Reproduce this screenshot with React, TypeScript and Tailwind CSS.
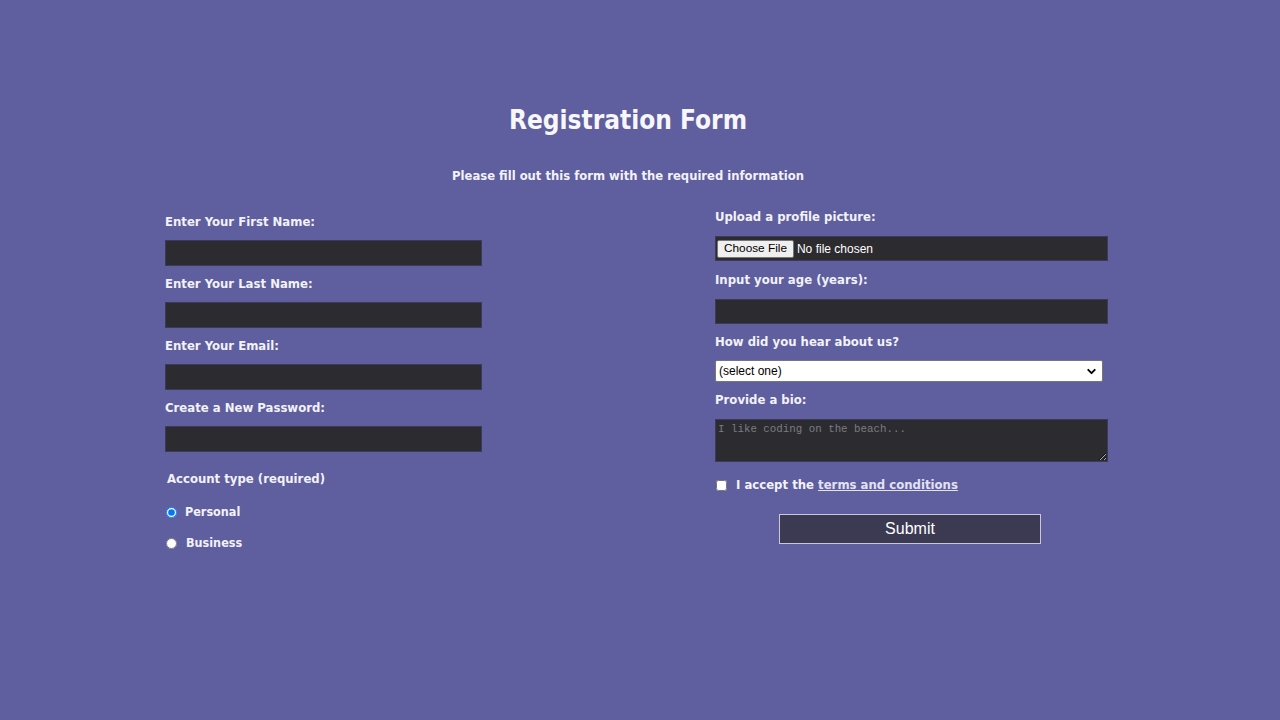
import { ChevronDown } from 'lucide-react';

const FONT = "font-['DejaVu_Sans_Condensed','DejaVu_Sans',sans-serif]";
const LABEL = 'block h-[20px] leading-[20px] text-[13px] font-bold';

function Field({ label, first }: { label: string; first?: boolean }) {
  return (
    <div className={first ? '' : 'mt-[8px]'}>
      <label className={LABEL}>{label}</label>
      <input
        type="text"
        className="mt-[8px] block h-[26px] w-full border border-[#3b3a5a] bg-[#2c2b30] text-white outline-none"
      />
    </div>
  );
}

export default function App() {
  return (
    <div className={`min-h-[720px] w-full bg-[#5f5e9e] text-[#f2f2f7] ${FONT}`}>
      <div className="pr-[24px] pt-[102px] text-center">
        <h1 className="h-[36px] leading-[36px] text-[26px] font-bold text-[#f7f7fb]">Registration Form</h1>
        <p className="mt-[28px] h-[20px] leading-[20px] text-[12.9px] font-bold">
          Please fill out this form with the required information
        </p>
      </div>

      <div className="flex pl-[165px]">
        {/* Left column */}
        <div className="mt-[26px] w-[317px]">
          <Field label="Enter Your First Name:" first />
          <Field label="Enter Your Last Name:" />
          <Field label="Enter Your Email:" />
          <Field label="Create a New Password:" />

          <p className="mt-[17px] ml-[2px] h-[20px] leading-[20px] text-[13px] font-bold">Account type (required)</p>
          <div className="mt-[13px] flex h-[20px] items-center">
            <input type="radio" name="acct" defaultChecked className="m-0 ml-[1px] h-[11px] w-[11px]" />
            <span className="ml-[8px] text-[12.5px] font-bold">Personal</span>
          </div>
          <div className="mt-[11px] flex h-[20px] items-center">
            <input type="radio" name="acct" className="m-0 ml-[1px] h-[11px] w-[11px]" />
            <span className="ml-[9px] text-[12.5px] font-bold">Business</span>
          </div>
        </div>

        {/* Right column */}
        <div className="ml-[233px] mt-[21px] w-[393px]">
          <label className={LABEL}>Upload a profile picture:</label>
          <div className="mt-[9px] flex h-[25px] items-center border border-[#3b3a5a] bg-[#2c2b30] pl-[1px]">
            <span className="flex h-[18px] items-center rounded-[2px] border border-[#767676] bg-[#efefef] px-[6px] font-['Liberation_Sans',Arial,sans-serif] text-[11.8px] text-black">
              Choose File
            </span>
            <span className="ml-[3px] font-['Liberation_Sans',Arial,sans-serif] text-[12px] text-white">No file chosen</span>
          </div>

          <label className={`mt-[9px] ${LABEL}`}>Input your age (years):</label>
          <input
            type="number"
            className="mt-[9px] block h-[25px] w-full border border-[#3b3a5a] bg-[#2c2b30] text-white outline-none"
          />

          <label className={`mt-[8px] ${LABEL}`}>How did you hear about us?</label>
          <div className="mt-[8px] flex h-[22px] w-[388px] items-center justify-between rounded-[2px] border border-[#767676] bg-white pl-[3px] pr-[4px] font-['Liberation_Sans',Arial,sans-serif] text-[12px] text-black">
            <span>(select one)</span>
            <ChevronDown size={13} strokeWidth={3.5} className="text-black" />
          </div>

          <label className={`mt-[8px] ${LABEL}`}>Provide a bio:</label>
          <textarea
            placeholder="I like coding on the beach..."
            className="mt-[9px] block h-[43px] w-full resize-y border border-[#3b3a5a] bg-[#2c2b30] px-[2px] py-[1px] font-['Liberation_Mono',monospace] text-[10.8px] text-white outline-none placeholder:text-[#7c7c80]"
          />

          <div className="mt-[13px] flex h-[20px] items-center">
            <input type="checkbox" className="m-0 ml-[1px] h-[11px] w-[11px]" />
            <span className="ml-[9px] text-[13px] font-bold">
              I accept the{' '}
              <a href="#" className="text-[#e3e2f2] underline">terms and conditions</a>
            </span>
          </div>

          <div className="mt-[19px] pl-[64px]">
            <button className="h-[30px] w-[262px] border border-[#c8c8d8] bg-[#3b3a52] font-['Liberation_Sans',Arial,sans-serif] text-[16px] text-white">
              Submit
            </button>
          </div>
        </div>
      </div>
    </div>
  );
}
